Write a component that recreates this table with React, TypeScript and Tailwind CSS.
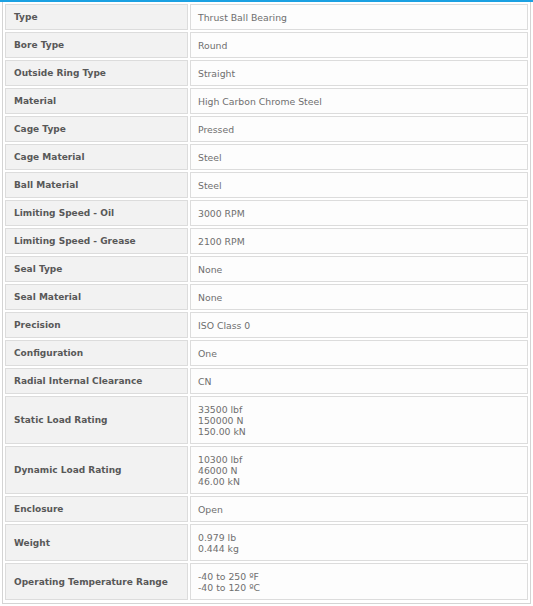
const rows: [string, string[]][] = [
  ['Type', ['Thrust Ball Bearing']],
  ['Bore Type', ['Round']],
  ['Outside Ring Type', ['Straight']],
  ['Material', ['High Carbon Chrome Steel']],
  ['Cage Type', ['Pressed']],
  ['Cage Material', ['Steel']],
  ['Ball Material', ['Steel']],
  ['Limiting Speed - Oil', ['3000 RPM']],
  ['Limiting Speed - Grease', ['2100 RPM']],
  ['Seal Type', ['None']],
  ['Seal Material', ['None']],
  ['Precision', ['ISO Class 0']],
  ['Configuration', ['One']],
  ['Radial Internal Clearance', ['CN']],
  ['Static Load Rating', ['33500 lbf', '150000 N', '150.00 kN']],
  ['Dynamic Load Rating', ['10300 lbf', '46000 N', '46.00 kN']],
  ['Enclosure', ['Open']],
  ['Weight', ['0.979 lb', '0.444 kg']],
  ['Operating Temperature Range', ['-40 to 250 ºF', '-40 to 120 ºC']],
]

export default function App() {
  return (
    <div className="w-[533px] h-[606px] bg-white border-t-2 border-[#1ba1e2] font-['DejaVu_Sans',Verdana,sans-serif] leading-[11px] text-[#6f6f6f]">
      <div className="ml-[2px] mr-[2px] border border-[#d4d4d4] border-t-0 pb-[1px]">
        <table className="w-full border-separate border-spacing-[2px]">
          <tbody>
            {rows.map(([label, values]) => (
              <tr key={label}>
                <td className="w-[183px] bg-[#f2f2f2] border border-[#dcdcdc] pl-[8px] pr-[4px] pt-[7px] pb-[6px] font-bold text-[9px] text-[#585858] align-middle whitespace-nowrap">
                  {label}
                </td>
                <td className="bg-[#fdfdfd] border border-[#dcdcdc] px-[7px] pt-[7px] pb-[6px] text-[9.3px] align-middle">
                  {values.map((v) => (
                    <div key={v}>{v}</div>
                  ))}
                </td>
              </tr>
            ))}
          </tbody>
        </table>
      </div>
    </div>
  )
}
